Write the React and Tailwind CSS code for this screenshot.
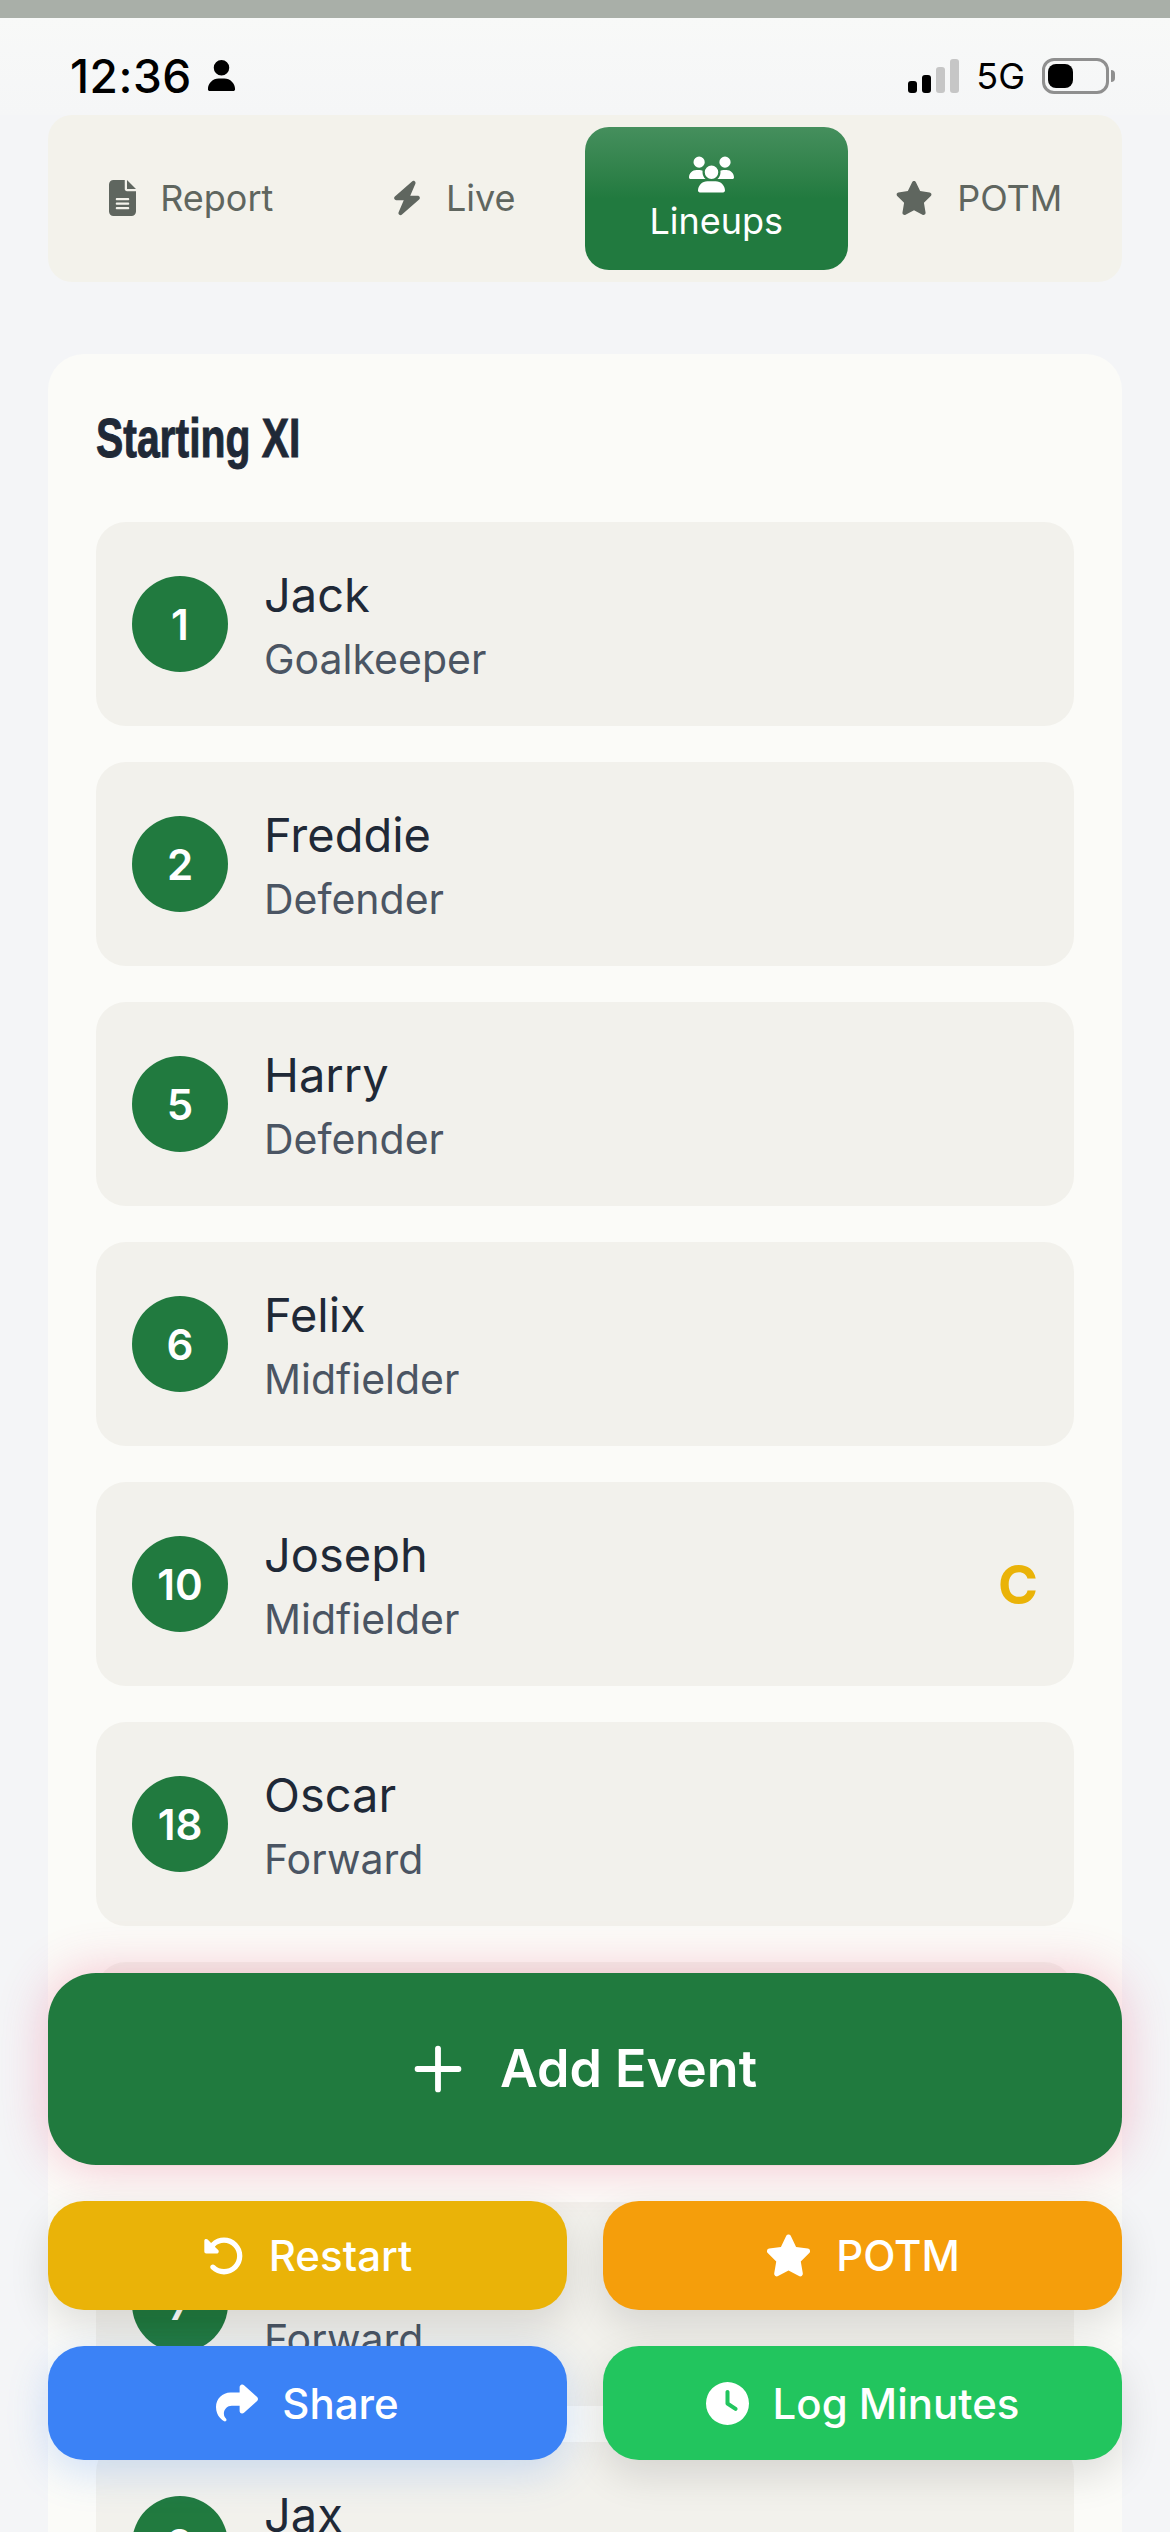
import React from "react";
import { Plus } from "lucide-react";
import {
  FaBolt,
  FaClock,
  FaFileLines,
  FaRotateLeft,
  FaShare,
  FaStar,
  FaUser,
  FaUsers,
} from "react-icons/fa6";

const players = [
  { num: "1", name: "Jack", pos: "Goalkeeper" },
  { num: "2", name: "Freddie", pos: "Defender" },
  { num: "5", name: "Harry", pos: "Defender" },
  { num: "6", name: "Felix", pos: "Midfielder" },
  { num: "10", name: "Joseph", pos: "Midfielder", captain: true },
  { num: "18", name: "Oscar", pos: "Forward" },
  { num: "", name: "", pos: "" },
  { num: "7", name: "", pos: "Forward" },
  { num: "9", name: "Jax", pos: "" },
];

const StatusBar = () => (
  <div className="flex h-[97px] items-center justify-between bg-gradient-to-b from-[#f8f9f8] to-[#f5f6f7] pl-[70px] pr-[55px] pt-[18px] text-black">
    <div className="flex items-center gap-[14px]">
      <span className="text-[46px] leading-none font-medium tracking-[0.5px]">12:36</span>
      <FaUser size={31} />
    </div>
    <div className="flex items-center">
      <div className="flex items-end gap-[5px]">
        <div className="h-[12px] w-[9px] rounded-[3px] bg-black" />
        <div className="h-[18px] w-[9px] rounded-[3px] bg-black" />
        <div className="h-[26px] w-[9px] rounded-[3px] bg-[#c6c6c6]" />
        <div className="h-[34px] w-[9px] rounded-[3px] bg-[#c6c6c6]" />
      </div>
      <span className="ml-[17px] text-[36px] leading-none">5G</span>
      <div className="ml-[17px] h-[36px] w-[67px] rounded-[12px] border-[3px] border-[#8f8f8f] p-[3px]">
        <div className="h-full w-[25px] rounded-[8px] bg-black" />
      </div>
      <div className="ml-[2px] h-[12px] w-[4px] rounded-r-full bg-[#8f8f8f]" />
    </div>
  </div>
);

const Tab = ({ icon, label }) => (
  <div className="flex items-center justify-center gap-6 pb-[2px] text-[36px] text-[#5f665f]">
    {icon}
    <span>{label}</span>
  </div>
);

const TabBar = () => (
  <div className="mx-12 grid h-[167px] grid-cols-4 rounded-[24px] bg-[#f3f2eb] p-3">
    <Tab icon={<FaFileLines className="h-9 w-[27px]" />} label="Report" />
    <Tab icon={<FaBolt className="h-9 w-[30px]" />} label="Live" />
    <div className="flex flex-col items-center justify-center rounded-[24px] bg-gradient-to-b from-[#458f5d] via-[#217a3f] to-[#217a3f] text-[36px] leading-[48px] text-white">
      <FaUsers size={45} className="mr-[10px]" />
      <span>Lineups</span>
    </div>
    <Tab icon={<FaStar size={38} />} label="POTM" />
  </div>
);

const PlayerRow = ({ player }) => (
  <div className="flex h-[204px] items-center gap-9 rounded-[30px] bg-[#f2f1ec] px-9">
    <div className="flex h-24 w-24 items-center justify-center rounded-full bg-[#217a3f] text-[42px] font-semibold text-white">
      {player.num}
    </div>
    <div className="flex-1 pt-[3px]">
      <div className="h-[67px] text-[47px] leading-[66px] text-[#1f2937]">{player.name}</div>
      <div className="h-[60px] text-[41px] leading-[60px] text-[#4b5563]">{player.pos}</div>
    </div>
    {player.captain && <span className="text-[54px] font-bold text-[#eab308]">C</span>}
  </div>
);

const ActionButton = ({ icon, label, color, height }) => (
  <div className={`flex items-center justify-center gap-[24px] rounded-[36px] text-[42px] font-medium text-white ${color} ${height}`}>
    {icon}
    <span>{label}</span>
  </div>
);

export default function App() {
  return (
    <div
      className="relative h-[2532px] overflow-hidden bg-[#f4f5f7]"
      style={{ fontFamily: "Inter, sans-serif" }}
    >
      <div className="h-[18px] bg-[#a9afa8]" />
      <StatusBar />
      <TabBar />

      <div className="mx-12 mt-[72px] rounded-[36px] bg-[#fbfbf8] p-12">
        <h2
          className="mb-12 h-[72px] origin-left scale-x-[0.73] text-[56px] leading-[72px] font-bold text-[#1f2937] [-webkit-text-stroke:1px_#1f2937]"
          style={{ fontFamily: '"Liberation Sans", sans-serif' }}
        >
          Starting XI
        </h2>
        <div className="flex flex-col gap-9">
          {players.map((p, i) => (
            <PlayerRow key={i} player={p} />
          ))}
        </div>
      </div>

      {/* floating actions sit over the list */}
      <div className="absolute inset-x-12 bottom-[72px] flex flex-col gap-9">
        <div className="flex h-[192px] items-center justify-center gap-[27px] rounded-[48px] bg-[#207a3e] pr-[10px] text-[52px] font-semibold text-white shadow-[0_0_50px_rgba(235,60,110,0.3)]">
          <Plus size={70} strokeWidth={2} />
          <span>Add Event</span>
        </div>
        <div className="grid grid-cols-2 gap-9">
          <ActionButton
            icon={<FaRotateLeft size={42} />}
            label="Restart"
            color="bg-[#eab308] shadow-[0_15px_40px_rgba(0,0,0,0.12)]"
            height="h-[109px]"
          />
          <ActionButton
            icon={<FaStar size={47} />}
            label="POTM"
            color="bg-[#f59e0b] shadow-[0_15px_40px_rgba(0,0,0,0.12)]"
            height="h-[109px]"
          />
          <ActionButton
            icon={<FaShare size={42} />}
            label="Share"
            color="bg-[#3b82f6] shadow-[0_12px_40px_rgba(59,130,246,0.22)]"
            height="h-[114px]"
          />
          <ActionButton
            icon={<FaClock size={43} />}
            label="Log Minutes"
            color="bg-[#22c55e] shadow-[0_15px_40px_rgba(0,0,0,0.12)]"
            height="h-[114px]"
          />
        </div>
      </div>
    </div>
  );
}
